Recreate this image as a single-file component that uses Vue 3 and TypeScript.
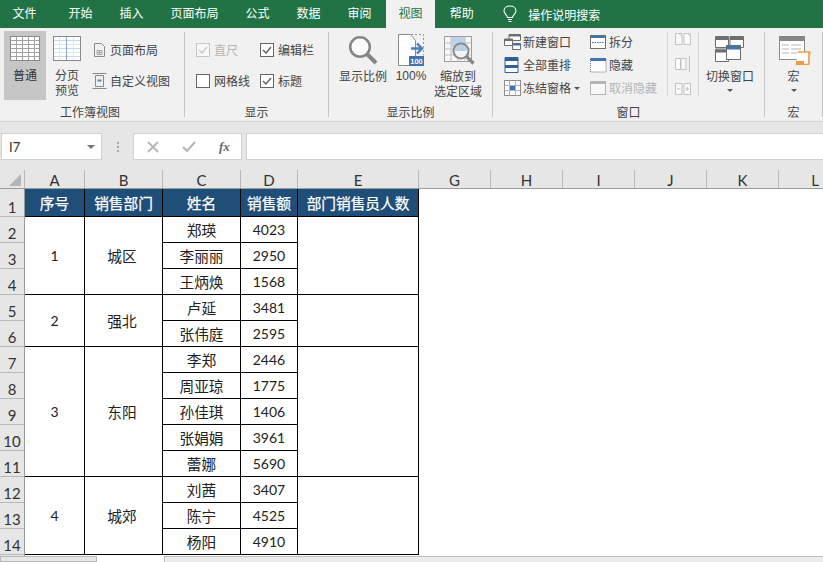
<script setup lang="ts">
interface Person { name: string; amount: number }
interface Dept { no: number; dept: string; people: Person[] }

const tabs = ['开始', '插入', '页面布局', '公式', '数据', '审阅', '视图', '帮助']
const columns = ['A', 'B', 'C', 'D', 'E']
const blankColumns = ['G', 'H', 'I', 'J', 'K', 'L']
const heads = ['序号', '销售部门', '姓名', '销售额', '部门销售员人数']
const rowNums = Array.from({ length: 14 }, (_, i) => i + 1)

const depts: Dept[] = [
  { no: 1, dept: '城区', people: [{ name: '郑瑛', amount: 4023 }, { name: '李丽丽', amount: 2950 }, { name: '王炳焕', amount: 1568 }] },
  { no: 2, dept: '强北', people: [{ name: '卢延', amount: 3481 }, { name: '张伟庭', amount: 2595 }] },
  { no: 3, dept: '东阳', people: [{ name: '李郑', amount: 2446 }, { name: '周亚琼', amount: 1775 }, { name: '孙佳琪', amount: 1406 }, { name: '张娟娟', amount: 3961 }, { name: '蕾娜', amount: 5690 }] },
  { no: 4, dept: '城郊', people: [{ name: '刘茜', amount: 3407 }, { name: '陈宁', amount: 4525 }, { name: '杨阳', amount: 4910 }] },
]

function startRow(index: number): number {
  let row = 2
  for (let i = 0; i < index; i++) row += depts[i].people.length
  return row
}
function span(index: number): string {
  return `${startRow(index)} / span ${depts[index].people.length}`
}
function personRow(index: number, p: number): string {
  return String(startRow(index) + p)
}
</script>

<template>
  <div class="app">
    <nav class="tabbar">
      <span class="tab first">文件</span>
      <span v-for="t in tabs" :key="t" class="tab" :class="{ active: t === '视图' }">{{ t }}</span>
      <svg class="bulb" width="14" height="18" viewBox="0 0 14 18" fill="none" stroke="#fff" stroke-width="1.1">
        <path d="M4.5 12.5C4.3 10 1 8.8 1 5.8 1 3 3.6 1 7 1s6 2 6 4.8c0 3-3.3 4.200-3.500 6.700z" />
        <path d="M5 14.500h4M5.500 16.500h3" />
      </svg>
      <span class="search">操作说明搜索</span>
    </nav>

    <section class="ribbon">
      <div class="group g1">
        <div class="body">
          <div class="big selected">
            <svg width="30" height="25" viewBox="0 0 30 25">
              <rect x=".5" y=".5" width="29" height="24" fill="#fff" stroke="#8a8a8a" />
              <path d="M.5 4.500h29M.5 8.500h29M.5 12.500h29M.5 16.500h29M.5 20.500h29M6.500 1v23M12.500 1v23M18.500 1v23M24.500 1v23" stroke="#a2a2a2" fill="none" />
            </svg>
            <span>普通</span>
          </div>
          <div class="big preview">
            <svg width="28" height="25" viewBox="0 0 28 25">
              <rect x=".5" y=".5" width="27" height="24" fill="#fff" stroke="#8a8a8a" />
              <path d="M1 4.500h26M1 12.500h26M1 20.500h26" stroke="#c5d7ec" fill="none" />
              <path d="M1 8.500h26M1 16.500h26M6.500 1v23M20.500 1v23" stroke="#dfe7f1" fill="none" />
              <path d="M13.500 1v23" stroke="#8aa5c8" fill="none" />
            </svg>
            <span>分页<br />预览</span>
          </div>
          <div class="view-list">
            <div class="icon-row">
              <svg width="15" height="16" viewBox="0 0 15 16" fill="none" stroke="#8a8a8a">
                <path d="M2.500 1.500h7l3 3v10h-10z" /><path d="M5 8.500h5v4H5zM7.500 8.500v4M5 10.500h5" stroke="#a5a5a5" />
              </svg>
              <span>页面布局</span>
            </div>
            <div class="icon-row">
              <svg width="15" height="16" viewBox="0 0 15 16" fill="none" stroke="#8a8a8a">
                <path d="M3.500 2.500h8v11h-8z" /><path d="M.5 .5h14M.5 15.500h14" /><path d="M5.500 7.500h4" stroke="#5b87bd" stroke-width="2" />
              </svg>
              <span>自定义视图</span>
            </div>
          </div>
        </div>
        <div class="label label-g1">工作簿视图</div>
      </div>

      <div class="group g2">
        <div class="body checks">
          <label class="check disabled">
            <svg width="14" height="14" viewBox="0 0 14 14"><rect x=".5" y=".5" width="13" height="13" fill="#f8f8f8" stroke="#c6c6c6" /><path d="M3 7l3 3 5-6" fill="none" stroke="#c6c6c6" stroke-width="1.200" /></svg>
            <span>直尺</span>
          </label>
          <label class="check">
            <svg width="14" height="14" viewBox="0 0 14 14"><rect x=".5" y=".5" width="13" height="13" fill="#fff" stroke="#666" /><path d="M3 7l3 3 5-6" fill="none" stroke="#555" stroke-width="1.200" /></svg>
            <span>编辑栏</span>
          </label>
          <label class="check">
            <svg width="14" height="14" viewBox="0 0 14 14"><rect x=".5" y=".5" width="13" height="13" fill="#fff" stroke="#666" /></svg>
            <span>网格线</span>
          </label>
          <label class="check">
            <svg width="14" height="14" viewBox="0 0 14 14"><rect x=".5" y=".5" width="13" height="13" fill="#fff" stroke="#666" /><path d="M3 7l3 3 5-6" fill="none" stroke="#555" stroke-width="1.200" /></svg>
            <span>标题</span>
          </label>
        </div>
        <div class="label">显示</div>
      </div>

      <div class="group g3">
        <div class="body">
          <div class="tall w-zoom">
            <svg width="30" height="30" viewBox="0 0 30 30" fill="none">
              <circle cx="12" cy="12" r="9.800" fill="#fbfbfb" stroke="#868686" stroke-width="2.600" />
              <path d="M19 19l9 9" stroke="#868686" stroke-width="4" />
            </svg>
            <span>显示比例</span>
          </div>
          <div class="tall w-100">
            <svg width="30" height="33" viewBox="0 0 30 33" fill="none">
              <path d="M2.500 .5h12l5 6v25h-17z" fill="#fff" stroke="#8a8a8a" />
              <path d="M15 .5h12.500v21" stroke="#9a9a9a" stroke-dasharray="2 2" />
              <path d="M15 14.500h11M21 9.500l5 5-5 5" stroke="#4a7ebb" stroke-width="2.400" />
              <rect x="13" y="22" width="15" height="10" fill="#3f74b2" />
              <text x="20.500" y="30" text-anchor="middle" class="mini">100</text>
            </svg>
            <span>100%</span>
          </div>
          <div class="tall w-sel">
            <svg width="32" height="31" viewBox="0 0 32 31" fill="none">
              <rect x=".5" y=".5" width="27" height="25" fill="#f7f7f7" stroke="#9d9d9d" />
              <path d="M.5 7h27M.5 13h27M.5 19h27M7 .5v25M14 .5v25M21 .5v25" stroke="#bdbdbd" />
              <rect x="7" y="1" width="14" height="10" fill="#bdd3ea" />
              <circle cx="17" cy="15" r="7.500" fill="#f4f4f4" stroke="#868686" stroke-width="2" />
              <path d="M10.500 15a6.500 6.500 0 0 1 13 0z" fill="#b8cfe8" />
              <path d="M22.500 20.500l7 7" stroke="#868686" stroke-width="3.200" />
            </svg>
            <span>缩放到<br />选定区域</span>
          </div>
        </div>
        <div class="label">显示比例</div>
      </div>

      <div class="group g4">
        <div class="body">
          <div class="win-col first-col">
            <div class="icon-row">
              <svg width="17" height="16" viewBox="0 0 17 16" fill="none">
                <path d="M5 .5h11.500v6H5z" fill="#fff" stroke="#6e6e6e" /><path d="M5 1h11.500v1.500H5z" fill="#6e6e6e" />
                <path d="M.5 5h8v6.500h-8z" fill="#fff" stroke="#6e6e6e" /><path d="M.5 5h8v2h-8z" fill="#6e6e6e" />
                <path d="M8.500 9.500h8v6h-8z" fill="#fff" stroke="#6e6e6e" /><path d="M8.500 9.500h8v2h-8z" fill="#3f74b2" />
              </svg>
              <span>新建窗口</span>
            </div>
            <div class="icon-row">
              <svg width="17" height="16" viewBox="0 0 17 16" fill="none">
                <path d="M1 .5h13v15H1z" fill="#fff" stroke="#2f6096" /><path d="M1 1h13v3H1zM1 8h13v3H1z" fill="#2f6096" />
              </svg>
              <span>全部重排</span>
            </div>
            <div class="icon-row">
              <svg width="17" height="16" viewBox="0 0 17 16" fill="none">
                <rect x=".5" y=".5" width="16" height="15" fill="#fff" stroke="#8f8f8f" />
                <path d="M1 5.500h15M1 10.500h15M5.500 1v14M11.500 1v14" stroke="#a8b8cb" />
                <rect x="6" y="6" width="5" height="4" fill="#3f74b2" />
              </svg>
              <span>冻结窗格</span>
              <i class="caret small"></i>
            </div>
          </div>
          <div class="win-col second-col">
            <div class="icon-row">
              <svg width="17" height="16" viewBox="0 0 17 16" fill="none">
                <rect x=".5" y="1.500" width="15" height="13" fill="#fff" stroke="#6e6e6e" /><path d="M1 2h14v2H1z" fill="#3f74b2" /><path d="M2 8.500h12" stroke="#3f74b2" stroke-dasharray="1.500 1" />
              </svg>
              <span>拆分</span>
            </div>
            <div class="icon-row">
              <svg width="17" height="16" viewBox="0 0 17 16" fill="none">
                <path d="M.5 2h15.500v13H.5z" fill="#fff" stroke="#6e6e6e" stroke-dasharray="1 1" /><path d="M.5 1h15.500v3H.5z" fill="#3f74b2" />
              </svg>
              <span>隐藏</span>
            </div>
            <div class="icon-row off">
              <svg width="17" height="16" viewBox="0 0 17 16" fill="none">
                <rect x=".5" y="1.500" width="15" height="13" fill="#f8f8f8" stroke="#b5b5b5" /><path d="M1 2h14v2H1z" fill="#b5b5b5" />
              </svg>
              <span>取消隐藏</span>
            </div>
          </div>
          <div class="mini-col">
            <svg width="16" height="14" viewBox="0 0 16 14" fill="none" stroke="#c3c3c3"><path d="M.5 1.500h6.500v11H.5zM9 1.500h6.500v11H9z" fill="#fafafa" /><path d="M4 1.500l3 3M12.500 1.500l3 3" /></svg>
            <svg width="16" height="18" viewBox="0 0 16 18" fill="none" stroke="#c3c3c3"><path d="M.5 3.500h5v11h-5zM6 3.500h5v11H6z" fill="#fafafa" /><path d="M14.500 1v16" /></svg>
            <svg width="16" height="14" viewBox="0 0 16 14" fill="none" stroke="#c3c3c3"><path d="M.5 1.500h6.500v11H.5zM9 1.500h6.500v11H9z" fill="#fafafa" /><path d="M2 7h3.500M10.500 7H14M12.250 5v4" /></svg>
          </div>
          <div class="tall w-switch">
            <svg width="30" height="26" viewBox="0 0 30 26" fill="none">
              <path d="M.5 .5h13v11H.5zM15 .5h13.500v11H15zM.5 13h13v12.500H.5z" fill="#fff" stroke="#6e6e6e" />
              <path d="M.5 1h13v3H.5zM15 1h13.500v3H15zM.5 13.500h13v3H.5z" fill="#6e6e6e" />
              <rect x="11.500" y="9.500" width="14" height="14" fill="#fff" stroke="#6e6e6e" stroke-width="1" />
              <rect x="12" y="10" width="13" height="3.500" fill="#3f74b2" />
            </svg>
            <span>切换窗口</span>
            <i class="caret"></i>
          </div>
        </div>
        <div class="label">窗口</div>
      </div>

      <div class="group g5">
        <div class="body">
          <div class="tall w-macro">
            <svg width="32" height="29" viewBox="0 0 32 29" fill="none">
              <rect x=".5" y=".5" width="25" height="23" fill="#fff" stroke="#8a8a8a" />
              <rect x="0" y="0" width="26" height="5" fill="#868686" />
              <path d="M3 9h7M12 9h10M3 13h7M12 13h10M3 17h7M12 17h6" stroke="#b5b5b5" />
              <path d="M19 16h11v11a1.500 1.500 0 0 1-1.500 1.500H17" fill="#fff" stroke="#ed9a4a" stroke-width="1.600" />
              <path d="M17 25h8v3.500h-8z" fill="#ed9a4a" />
              <path d="M30 15.500h1.500v3H30z" fill="#ed9a4a" />
            </svg>
            <span>宏</span>
            <i class="caret"></i>
          </div>
        </div>
        <div class="label">宏</div>
      </div>
    </section>

    <div class="formula">
      <div class="namebox"><span>I7</span><i class="caret name-caret"></i></div>
      <div class="dots"><b></b><b></b><b></b></div>
      <div class="fx-box">
        <svg width="12" height="12" viewBox="0 0 12 12" fill="none" stroke="#b5b5b5" stroke-width="1.800"><path d="M1 1l10 10M11 1L1 11" /></svg>
        <svg width="14" height="12" viewBox="0 0 14 12" fill="none" stroke="#b5b5b5" stroke-width="2"><path d="M1 6l4 4 8-9" /></svg>
        <em>fx</em>
      </div>
      <div class="input"></div>
    </div>

    <div class="colhead">
      <div class="corner"><i></i></div>
      <div v-for="c in columns" :key="c" class="col" :class="'col-' + c">{{ c }}</div>
      <div v-for="c in blankColumns" :key="c" class="col col-blank" :class="'col-' + c">{{ c }}</div>
    </div>

    <div class="sheet">
      <div class="rowheads">
        <div v-for="n in rowNums" :key="n" class="rowhead" :class="{ tall1: n === 1 }">{{ n }}</div>
      </div>
      <div class="table">
        <div v-for="h in heads" :key="h" class="cell head">{{ h }}</div>
        <template v-for="(d, i) in depts" :key="d.no">
          <div class="cell num c1" :style="{ gridRow: span(i) }">{{ d.no }}</div>
          <div class="cell c2" :style="{ gridRow: span(i) }">{{ d.dept }}</div>
          <template v-for="(p, j) in d.people" :key="p.name">
            <div class="cell c3" :style="{ gridRow: personRow(i, j) }">{{ p.name }}</div>
            <div class="cell num c4" :style="{ gridRow: personRow(i, j) }">{{ p.amount }}</div>
          </template>
          <div class="cell c5" :style="{ gridRow: span(i) }"></div>
        </template>
      </div>
    </div>

    <div class="bottom">
      <div class="sheet-tabs"></div>
      <div class="gap"></div>
      <div class="hscroll"></div>
    </div>
  </div>
</template>

<style scoped>
.app {
  width: 823px;
  height: 562px;
  overflow: hidden;
  background: #e6e6e6;
  font-family: "Noto Sans CJK SC", "Liberation Sans", sans-serif;
  font-size: 12px;
  color: #444;
  display: flex;
  flex-direction: column;
}
.tabbar {
  height: 28px;
  background: #217346;
  color: #fff;
  display: flex;
  align-items: center;
  flex: none;
}
.tab {
  height: 28px;
  line-height: 25px;
  padding: 0 12.500px;
  margin-right: 2px;
  flex: none;
}
.tab.first {
  margin-right: 7px;
}
.tab.active {
  background: #f1f1f1;
  color: #217346;
}
.bulb {
  margin-left: 15px;
  flex: none;
}
.search {
  margin-left: 11px;
  line-height: 25px;
}
.ribbon {
  height: 94px;
  flex: none;
  background: #f1f1f1;
  border-bottom: 1px solid #d4d4d4;
  display: flex;
  align-items: flex-start;
  padding-top: 4px;
  box-sizing: border-box;
}
.group {
  height: 85px;
  box-sizing: border-box;
  border-right: 1px solid #c6c6c6;
  flex: none;
  display: flex;
  flex-direction: column;
}
.g1 { width: 185px; }
.g2 { width: 144px; }
.g3 { width: 164px; }
.g4 { width: 272px; }
.g5 { width: 58px; }
.body {
  height: 71px;
  display: flex;
  flex: none;
}
.label {
  height: 14px;
  line-height: 18px;
  text-align: center;
  white-space: nowrap;
}
.label-g1 {
  padding-right: 4px;
}
.big {
  display: flex;
  flex-direction: column;
  align-items: center;
  flex: none;
  line-height: 15px;
  text-align: center;
  padding-top: 5px;
  margin-top: -1px;
  height: 69px;
  box-sizing: border-box;
}
.big svg {
  margin-bottom: 6px;
  flex: none;
}
.selected {
  width: 42px;
  margin-left: 4px;
  background: #c6c6c6;
  color: #333;
}
.preview {
  width: 34px;
  margin-left: 4px;
}
.view-list {
  margin-left: 8px;
  padding-top: 10px;
  display: flex;
  flex-direction: column;
  gap: 15px;
}
.icon-row {
  height: 16px;
  line-height: 16px;
  display: flex;
  align-items: center;
  gap: 3px;
  white-space: nowrap;
}
.checks {
  display: grid;
  grid-template-columns: 64px 64px;
  grid-auto-rows: 14px;
  row-gap: 17px;
  padding: 11px 0 0 11px;
  box-sizing: border-box;
  align-content: start;
}
.check {
  display: flex;
  align-items: center;
  gap: 4px;
  line-height: 14px;
  white-space: nowrap;
}
.check.disabled {
  color: #b5b5b5;
}
.tall {
  display: flex;
  flex-direction: column;
  align-items: center;
  flex: none;
  line-height: 15px;
  text-align: center;
  white-space: nowrap;
}
.w-zoom {
  width: 48px;
  margin-left: 10px;
  padding-top: 3px;
}
.w-zoom svg { margin-bottom: 3px; }
.w-100 {
  width: 40px;
  margin-left: 4px;
  padding-top: 2px;
}
.w-100 svg { margin-bottom: 2px; }
.w-100 span { font-family: "Liberation Sans", sans-serif; font-size: 12px; }
.w-sel {
  width: 48px;
  margin-left: 3px;
  padding-top: 4px;
}
.w-sel svg { margin-bottom: 1px; margin-left: 3px; }
.mini {
  font: 700 7.500px "Liberation Sans", sans-serif;
  fill: #fff;
}
.first-col, .second-col {
  padding-top: 2px;
  display: flex;
  flex-direction: column;
  gap: 7px;
  flex: none;
}
.first-col {
  width: 86px;
  margin-left: 11px;
}
.first-col .icon-row, .second-col .icon-row {
  gap: 2px;
}
.second-col {
  width: 78px;
  box-sizing: border-box;
  border-right: 1px solid #d5d5d5;
  height: 64px;
}
.off { color: #b5b5b5; }
.mini-col {
  width: 31px;
  box-sizing: border-box;
  height: 64px;
  border-right: 1px solid #d5d5d5;
  display: flex;
  flex-direction: column;
  align-items: center;
  justify-content: space-between;
  flex: none;
}
.w-switch {
  width: 62px;
  padding-top: 4px;
}
.w-switch svg { margin-bottom: 6px; }
.w-switch .caret { margin-top: 6px; }
.w-macro {
  width: 57px;
  padding-top: 4px;
}
.w-macro svg { margin-bottom: 3px; margin-left: 2px; }
.w-macro .caret { margin-top: 6px; }
.caret {
  display: block;
  width: 0;
  height: 0;
  border-left: 3px solid transparent;
  border-right: 3px solid transparent;
  border-top: 3px solid #555;
  margin-top: 5px;
}
.caret.small {
  margin: 0 0 0 1px;
}
.formula {
  height: 27px;
  margin-top: 11px;
  flex: none;
  display: flex;
}
.namebox {
  width: 101px;
  margin-left: 1px;
  box-sizing: border-box;
  background: #fff;
  border: 1px solid #d0d0d0;
  display: flex;
  align-items: center;
  justify-content: space-between;
  padding: 0 6px 0 7px;
  font: 13px "Lato", sans-serif;
  color: #333;
}
.name-caret {
  border-left-width: 4px;
  border-right-width: 4px;
  border-top: 4px solid #777;
  margin: 0;
}
.dots {
  width: 31px;
  display: flex;
  flex-direction: column;
  align-items: center;
  justify-content: center;
  gap: 2px;
  flex: none;
}
.dots b {
  width: 2px;
  height: 2px;
  background: #a8a8a8;
  display: block;
}
.fx-box {
  width: 109px;
  box-sizing: border-box;
  background: #fff;
  border: 1px solid #d0d0d0;
  display: flex;
  align-items: center;
  padding-left: 13px;
  flex: none;
}
.fx-box svg:nth-child(2) {
  margin-left: 23px;
}
.fx-box em {
  margin-left: 23px;
  font: italic 700 13px "Liberation Serif", serif;
  color: #666;
}
.input {
  flex: 1;
  margin-left: 4px;
  background: #fff;
  border: 1px solid #d0d0d0;
  border-right: 0;
}
.colhead {
  height: 19px;
  margin-top: 10px;
  flex: none;
  display: flex;
  background: #e6e6e6;
  border-bottom: 1px solid #9b9b9b;
  box-sizing: border-box;
  font: 15px/20px "Lato", "Liberation Sans", sans-serif;
  color: #333;
}
.corner {
  width: 25px;
  box-sizing: border-box;
  border-right: 1px solid #b8b8b8;
  display: flex;
  align-items: flex-end;
  justify-content: flex-end;
  padding: 0 3px 2px 0;
  flex: none;
}
.corner i {
  display: block;
  width: 0;
  height: 0;
  border-left: 12px solid transparent;
  border-bottom: 12px solid #b4b4b4;
}
.col {
  box-sizing: border-box;
  border-right: 1px solid #b8b8b8;
  text-align: center;
  flex: none;
}
.col-A { width: 60px; }
.col-B, .col-C { width: 78px; }
.col-D { width: 57px; }
.col-E { width: 121px; }
.col-blank { width: 72px; }
.col-L { border-right: 0; }
.sheet {
  height: 367px;
  flex: none;
  display: flex;
  background: #fff;
  overflow: hidden;
}
.rowheads {
  width: 25px;
  flex: none;
  background: #e6e6e6;
  border-right: 1px solid #9b9b9b;
  box-sizing: border-box;
  font: 15px "Lato", "Liberation Sans", sans-serif;
  color: #333;
}
.rowhead {
  height: 26px;
  box-sizing: border-box;
  border-bottom: 1px solid #b8b8b8;
  display: flex;
  align-items: flex-end;
  justify-content: center;
  line-height: 18px;
}
.rowhead.tall1 {
  height: 28px;
}
.table {
  display: grid;
  grid-template-columns: 60px 78px 78px 57px 121px;
  grid-template-rows: 28px repeat(13, 26px);
  flex: none;
  align-self: flex-start;
  color: #222;
  font-size: 14.670px;
}
.cell {
  box-sizing: border-box;
  border-right: 1px solid #000;
  border-bottom: 1px solid #000;
  display: flex;
  align-items: center;
  justify-content: center;
  white-space: nowrap;
}
.head {
  background: #1f4e79;
  color: #fff;
  font-weight: 400;
  -webkit-text-stroke: 0.25px #fff;
  grid-row: 1;
}
.num {
  font-family: "Lato", "Liberation Sans", sans-serif;
  font-size: 14px;
}
.c1 { grid-column: 1; }
.c2 { grid-column: 2; padding-right: 3px; }
.c3 { grid-column: 3; }
.c4 { grid-column: 4; }
.c5 { grid-column: 5; }
.bottom {
  flex: 1;
  display: flex;
  background: #fff;
}
.sheet-tabs {
  width: 97px;
  background: #e6e6e6;
  border: 1px solid #b8b8b8;
  box-sizing: border-box;
  flex: none;
}
.gap {
  width: 67px;
  flex: none;
}
.hscroll {
  flex: 1;
  background: #ececec;
  border-top: 1px solid #c0c0c0;
  border-left: 1px solid #c0c0c0;
}
</style>
